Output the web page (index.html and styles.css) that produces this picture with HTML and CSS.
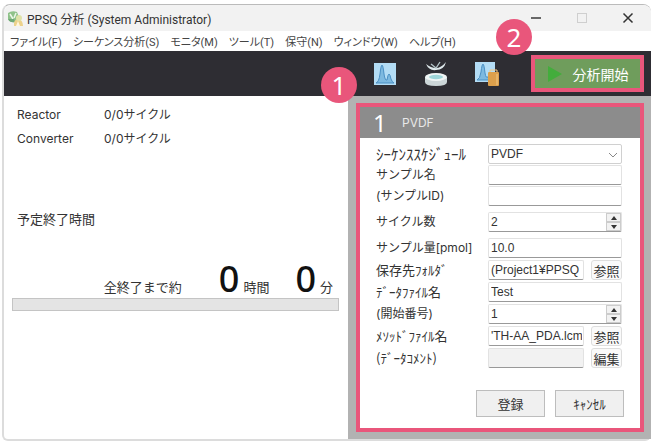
FILE: index.html
```html
<!DOCTYPE html>
<html lang="ja">
<head>
  <meta charset="UTF-8">
  <title>PPSQ 分析</title>
  <link rel="stylesheet" href="styles.css">
</head>
<body>
  <div class="window">
    <!-- Title bar -->
    <header class="title-bar">
      <svg class="app-icon" width="17" height="17" viewBox="0 0 17 17">
        <path d="M1 3 Q5 0 10 2 L12 7 L8 12 Q3 13 1 9 Z" fill="#8fc28a"/>
        <path d="M3 4 L6 9 M9 3 L7 8" stroke="#eef7ea" stroke-width="1.5" fill="none"/>
        <path d="M1 9 Q3 13 8 12 L7 9 Z" fill="#6fa877"/>
        <path d="M7 16 Q6 10 11 9 Q16 10 16 16 Z" fill="#ecd28c"/>
        <circle cx="12" cy="8" r="3" fill="#dfe2a8"/>
        <path d="M9 16 L11 11 L13 16 Z" fill="#fff6dc"/>
      </svg>
      <h1 class="title">PPSQ 分析 (System Administrator)</h1>
      <div class="window-buttons">
        <button type="button" aria-label="最小化">
          <svg width="12" height="12" viewBox="0 0 12 12"><path d="M1 6 H11" stroke="#444" stroke-width="1.6"/></svg>
        </button>
        <button type="button" aria-label="最大化" disabled>
          <svg width="12" height="12" viewBox="0 0 12 12"><rect x="1.5" y="1.5" width="9" height="9" fill="none" stroke="#cfcfcf"/></svg>
        </button>
        <button type="button" aria-label="閉じる">
          <svg width="12" height="12" viewBox="0 0 12 12"><path d="M1.5 1.5 L10.5 10.5 M10.5 1.5 L1.5 10.5" stroke="#333" stroke-width="1.5"/></svg>
        </button>
      </div>
    </header>

    <!-- Menu -->
    <nav class="menu">
      <a href="#">ファイル(F)</a>
      <a href="#">シーケンス分析(S)</a>
      <a href="#">モニタ(M)</a>
      <a href="#">ツール(T)</a>
      <a href="#">保守(N)</a>
      <a href="#">ウィンドウ(W)</a>
      <a href="#">ヘルプ(H)</a>
    </nav>

    <!-- Toolbar -->
    <div class="toolbar">
      <button type="button" class="tool" aria-label="クロマトグラム">
        <svg width="26" height="28" viewBox="0 0 26 28">
          <rect x="2" y="3" width="22" height="22" fill="#b3dcf5"/>
          <path d="M4 23 Q7 22 8 14 Q9 5 10 5 Q11 5 12 14 Q13 21 15 20 Q16 14 17 14 Q18 14 19 19 Q20 22 22 23 Z" fill="#7db9e0" stroke="#4a8fc4"/>
        </svg>
      </button>
      <button type="button" class="tool" aria-label="サンプル">
        <svg width="26" height="28" viewBox="0 0 26 28">
          <path d="M3 4 Q6 11 13 10 Q21 10 23 2 Q18 8 13 8 Q8 8 3 4 Z" fill="#dfe9ec"/>
          <path d="M8 4 L13 8 L17 2" stroke="#b4c4c8" stroke-width="1.3" fill="none"/>
          <path d="M2 17 V22 Q2 26 13 26 Q24 26 24 22 V17 Z" fill="#ccd6d8"/>
          <ellipse cx="13" cy="17" rx="11" ry="4" fill="#f0f5f5"/>
          <ellipse cx="13" cy="17" rx="7" ry="2.2" fill="#9ed5d8"/>
        </svg>
      </button>
      <button type="button" class="tool" aria-label="レポート">
        <svg width="26" height="28" viewBox="0 0 26 28">
          <rect x="1" y="2" width="20" height="20" fill="#b3dcf5"/>
          <path d="M3 20 Q6 19 7 12 Q8 4 9 4 Q10 4 11 13 Q12 19 14 17 L16 12 L19 20 Z" fill="#7db9e0" stroke="#4a8fc4"/>
          <rect x="14" y="12" width="11" height="14" rx="1" fill="#dda04c"/>
          <path d="M16 12 V10 H23 V12 M23 14 V25" stroke="#f2c987" fill="none"/>
        </svg>
      </button>
      <div class="callout callout-start">
        <span class="badge">2</span>
        <button type="button" class="start">
          <svg width="16" height="16" viewBox="0 0 16 16"><path d="M1 0 L15 8 L1 16 Z" fill="#43ad3c"/></svg>
          分析開始
        </button>
      </div>
    </div>

    <main class="content">
      <!-- Progress -->
      <section class="status">
        <dl class="cycles">
          <dt>Reactor</dt><dd>0/0サイクル</dd>
          <dt>Converter</dt><dd>0/0サイクル</dd>
        </dl>
        <p class="end-time">予定終了時間</p>
        <div class="remaining">
          <label for="progress">全終了まで約</label>
          <span class="amount">0</span><span class="unit">時間</span>
          <span class="amount">0</span><span class="unit">分</span>
        </div>
        <progress id="progress" value="0" max="100"></progress>
      </section>

      <!-- Sample settings -->
      <section class="settings">
        <div class="callout">
          <span class="badge">1</span>
          <h2 class="sample-title"><span class="sample-no">1</span>PVDF</h2>
          <form class="form">
            <div class="group tight">
              <div class="row">
                <label for="schedule" class="half wide">ｼｰｹﾝｽｽｹｼﾞｭｰﾙ</label>
                <div class="select-box">
                  <select id="schedule"><option>PVDF</option></select>
                  <svg class="arrow" width="10" height="6" viewBox="0 0 10 6"><path d="M1 1 L5 5 L9 1" fill="none" stroke="#888"/></svg>
                </div>
              </div>
              <div class="row">
                <label for="sample">サンプル名</label>
                <input type="text" id="sample">
              </div>
              <div class="row">
                <label for="sampleId">(サンプルID)</label>
                <input type="text" id="sampleId">
              </div>
            </div>
            <div class="group">
              <div class="row">
                <label for="cycle">サイクル数</label>
                <div class="spin">
                  <input type="text" id="cycle" value="2">
                  <div class="spin-buttons">
                    <button type="button" aria-label="増やす"><svg width="6" height="4" viewBox="0 0 6 4"><path d="M0 4 L3 0 L6 4 Z" fill="#333"/></svg></button>
                    <button type="button" aria-label="減らす"><svg width="6" height="4" viewBox="0 0 6 4"><path d="M0 0 L3 4 L6 0 Z" fill="#333"/></svg></button>
                  </div>
                </div>
              </div>
            </div>
            <div class="group">
              <div class="row">
                <label for="amount">サンプル量[pmol]</label>
                <input type="text" id="amount" value="10.0">
              </div>
              <div class="row">
                <label for="folder" class="half">保存先ﾌｫﾙﾀﾞ</label>
                <input type="text" id="folder" value="(Project1¥PPSQ">
                <button type="button" class="side">参照</button>
              </div>
              <div class="row">
                <label for="dataFile" class="half">ﾃﾞｰﾀﾌｧｲﾙ名</label>
                <input type="text" id="dataFile" value="Test">
              </div>
              <div class="row">
                <label for="startNo">(開始番号)</label>
                <div class="spin">
                  <input type="text" id="startNo" value="1">
                  <div class="spin-buttons">
                    <button type="button" aria-label="増やす"><svg width="6" height="4" viewBox="0 0 6 4"><path d="M0 4 L3 0 L6 4 Z" fill="#333"/></svg></button>
                    <button type="button" aria-label="減らす"><svg width="6" height="4" viewBox="0 0 6 4"><path d="M0 0 L3 4 L6 0 Z" fill="#333"/></svg></button>
                  </div>
                </div>
              </div>
              <div class="row">
                <label for="method" class="half">ﾒｿｯﾄﾞﾌｧｲﾙ名</label>
                <input type="text" id="method" value="'TH-AA_PDA.lcm">
                <button type="button" class="side">参照</button>
              </div>
              <div class="row">
                <label for="comment" class="half">(ﾃﾞｰﾀｺﾒﾝﾄ)</label>
                <input type="text" id="comment" disabled>
                <button type="button" class="side">編集</button>
              </div>
            </div>
            <div class="actions">
              <button type="submit">登録</button>
              <button type="button">ｷｬﾝｾﾙ</button>
            </div>
          </form>
        </div>
      </section>
    </main>
  </div>
</body>
</html>
```
FILE: styles.css
```css
*, *::before, *::after {
  box-sizing: border-box;
}

body, h1, h2, p, dl, dd {
  margin: 0;
}

body {
  background-color: #fff;
  font-family: "Inter", "Noto Sans CJK JP", sans-serif;
  font-size: 12px;
  color: #333;
  padding: 4px 2px 3px;
  min-height: 100vh;
  display: flex;
}

button, input, select {
  font: inherit;
  color: inherit;
  margin: 0;
}

button {
  padding: 0;
  border: none;
  background: none;
  display: flex;
  align-items: center;
  justify-content: center;
}

.window {
  flex: 1;
  display: flex;
  flex-direction: column;
  border: 2px solid #dcdcdc;
  border-top: 1px solid #bbb;
  border-right: none;
  border-radius: 8px 8px 6px 6px;
}

/* Title bar */
.title-bar {
  display: flex;
  align-items: center;
  height: 26px;
  padding-left: 3px;
  background-color: #f2f2f2;
  border-radius: 8px 8px 0 0;
}

.title {
  flex: 1;
  margin-left: 3px;
  font-family: "Roboto", "Noto Sans CJK JP", sans-serif;
  font-size: 12px;
  font-weight: normal;
}

.window-buttons {
  display: flex;
}

.window-buttons button {
  width: 46px;
  height: 26px;
}

.menu {
  display: flex;
  align-items: center;
  gap: 11px;
  height: 20px;
  padding: 0 6px;
  font-family: "Roboto", "Noto Sans CJK JP", sans-serif;
  font-size: 11px;
  font-feature-settings: "palt";
}

.menu a {
  color: #444;
  text-decoration: none;
  white-space: nowrap;
}

/* Toolbar */
.toolbar {
  display: flex;
  align-items: center;
  justify-content: flex-end;
  gap: 25px;
  height: 45px;
  padding-right: 7px;
  background-color: #2e2d33;
}

.callout {
  position: relative;
  border: 4px solid #e9567b;
}

.callout-start {
  margin-left: 6px;
}

.badge {
  position: absolute;
  top: -40px;
  left: -39px;
  width: 36px;
  height: 36px;
  border-radius: 50%;
  background-color: #e9567b;
  color: #fff;
  font-family: "Noto Sans", sans-serif;
  font-size: 26px;
  line-height: 36px;
  text-align: center;
}

.start {
  width: 105px;
  height: 29px;
  gap: 10px;
  background-color: #6f9d5c;
  color: #fff;
  font-size: 14px;
}

/* Content */
.content {
  flex: 1;
  display: flex;
}

.status {
  flex: 1;
  padding: 9px 9px 0 8px;
}

.cycles {
  display: grid;
  grid-template-columns: 87px 1fr;
  row-gap: 4px;
  padding-left: 5px;
  line-height: 20px;
}

.end-time {
  margin-top: 60px;
  padding-left: 5px;
  font-size: 13px;
  line-height: 20px;
}

.remaining {
  display: flex;
  align-items: baseline;
  justify-content: flex-end;
  height: 38px;
  margin-top: 31px;
  padding-right: 6px;
  font-size: 13px;
  line-height: 38px;
}

.remaining .amount {
  margin-left: 37px;
  font-family: "Noto Sans", sans-serif;
  font-size: 36px;
  font-weight: 500;
  color: #111;
}

.remaining .unit + .amount {
  margin-left: 26px;
}

.unit {
  margin-left: 4px;
}

progress {
  display: block;
  width: 100%;
  height: 13px;
  appearance: none;
  border: 1px solid #c4c4c4;
  background-color: #e4e4e4;
}

progress::-webkit-progress-bar {
  background-color: #e4e4e4;
}

/* Sample settings */
.settings {
  width: 303px;
  padding: 7px 7px 7px 8px;
  background-color: #b2b2b2;
}

.settings .callout {
  height: 100%;
  background-color: #fff;
}

.sample-title {
  display: flex;
  align-items: center;
  height: 31px;
  padding-left: 13px;
  background-color: #8c8c8c;
  color: #e8e8e8;
  font-size: 12px;
  font-weight: normal;
}

.sample-no {
  width: 29px;
  font-family: "Noto Sans", sans-serif;
  font-size: 24px;
  color: #fff;
}

.form {
  display: flex;
  flex-direction: column;
  gap: 6px;
  padding: 6px 16px 11px;
}

.group {
  display: flex;
  flex-direction: column;
  gap: 2px;
  padding-right: 2px;
}

.tight {
  gap: 1px;
}

.row {
  display: flex;
  height: 20px;
}

.row label {
  width: 112px;
  flex-shrink: 0;
  line-height: 20px;
  white-space: nowrap;
}

.row .half {
  font-family: "Noto Sans CJK JP", sans-serif;
  font-size: 13px;
}

.row .wide {
  font-size: 15px;
}

.row input, select {
  flex: 1;
  min-width: 0;
  width: 100%;
  height: 20px;
  padding: 0 1px 0 2px;
  border: 1px solid #e2e2e2;
  border-bottom-color: #999;
  border-radius: 2px;
  background-color: #fff;
  font-family: "Liberation Sans", "Noto Sans CJK JP", sans-serif;
}

.row input:disabled {
  background-color: #f2f2f2;
}

.select-box, .spin {
  position: relative;
  flex: 1;
  display: flex;
}

select {
  appearance: none;
  border-color: #d0d0d0;
}

.arrow {
  position: absolute;
  top: 8px;
  right: 4px;
}

.spin-buttons {
  position: absolute;
  top: 1px;
  right: 1px;
  bottom: 1px;
  width: 15px;
  display: flex;
  flex-direction: column;
}

.spin-buttons button {
  flex: 1;
  border: 1px solid #ccc;
  background-color: #f2f2f2;
}

.side {
  width: 31px;
  margin-left: 7px;
  border: 1px solid #ddd;
  border-radius: 3px;
  background-color: #fafafa;
  font-size: 13px;
}

.actions {
  display: flex;
  justify-content: flex-end;
  gap: 10px;
  margin-top: 16px;
}

.actions button {
  width: 69px;
  height: 27px;
  border: 1px solid #bdbdbd;
  background-color: #f0f0f0;
  font-size: 13px;
}
```
